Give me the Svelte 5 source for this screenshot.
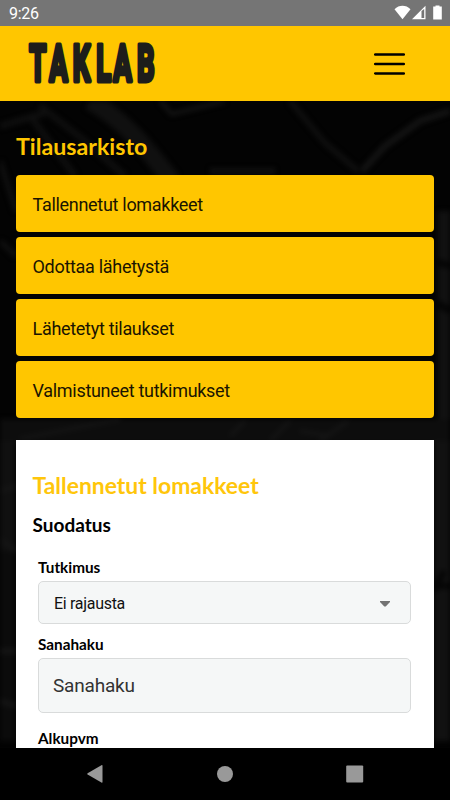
<script>
  const links = [
    'Tallennetut lomakkeet',
    'Odottaa lähetystä',
    'Lähetetyt tilaukset',
    'Valmistuneet tutkimukset'
  ];

  let selected = 0;
  let search = '';
</script>

<div class="screen">
  <div class="status">
    <span>9:26</span>
    <svg width="50" height="16" viewBox="0 0 50 16" fill="#fff">
      <path d="M0.5 4.2C5 -0.4 12 -0.4 16.5 4.2L8.5 14.2Z" />
      <path d="M31.5 0.8V14.2H18Z" fill="#fff" />
      <path d="M27.5 6V13H30.2V4Z" fill="#757575" />
      <path d="M41.5 1.5V0.6H45.5V1.5H47.8V14.6H39.2V1.5Z" />
    </svg>
  </div>

  <header>
    <svg class="logo" width="134" height="60" viewBox="0 -8 134 60">
      <text transform="scale(0.55 1)" x="4 40.5 83 126 157 200" y="39.2">TAKLAB</text>
    </svg>
    <button class="burger" aria-label="Valikko">
      <svg width="32" height="24" viewBox="0 0 32 24">
        <path d="M1.2 2.6H29.8M1.2 12H29.8M1.2 21.4H29.8" stroke="#000" stroke-width="2.5" stroke-linecap="round" />
      </svg>
    </button>
  </header>

  <main>
    <svg class="texture" width="450" height="647" viewBox="0 0 450 647" fill="none" stroke="#141414">
      <path d="M90 0C125 20 145 45 172 80" stroke-width="18" stroke="#101010" />
      <path d="M40 5L85 40L125 75M0 25L45 12M30 15L75 75" stroke-width="6" stroke="#0f0f0f" />
      <path d="M160 0L172 13L225 0" stroke-width="4" />
      <path d="M290 0L325 42L358 70" stroke-width="5" stroke="#101010" />
      <path d="M362 70L385 45L420 20L450 10" stroke-width="6" />
      <path d="M210 70H275" stroke-width="6" stroke="#0f0f0f" />
      <path d="M0 60L16 110M0 140L16 155" stroke-width="5" stroke="#101010" />
      <path d="M446 110V340" stroke-width="16" stroke="#111" />
      <path d="M434 160L450 165M434 200L450 210" stroke-width="7" stroke="#050505" />
      <path d="M0 330H450" stroke-width="24" stroke="#0d0d0d" />
      <path d="M20 338L120 318M230 335L245 320M270 340L290 320M320 340L348 320M300 330L330 335" stroke-width="4" />
      <path d="M7 340V450" stroke-width="16" stroke="#101010" />
      <path d="M7 450V640" stroke-width="16" stroke="#0b0b0b" />
      <path d="M0 390L16 385M0 438L16 450M0 550H16M0 600L16 605" stroke-width="6" />
      <path d="M443 340V640" stroke-width="18" stroke="#111" />
      <path d="M434 485H450M434 490L444 470" stroke-width="6" stroke="#050505" />
    </svg>

    <h1>Tilausarkisto</h1>

    <nav>
      {#each links as link, i}
        <button on:click={() => (selected = i)}>{link}</button>
      {/each}
    </nav>

    <section>
      <h2>{links[selected]}</h2>
      <h3>Suodatus</h3>

      <form on:submit|preventDefault>
        <label for="tutkimus">Tutkimus</label>
        <div class="select">
          <select id="tutkimus">
            <option>Ei rajausta</option>
          </select>
          <svg width="10" height="6" viewBox="0 0 10 6">
            <path d="M0 0H10V1L5.7 5.4H4.3L0 1Z" fill="#737373" />
          </svg>
        </div>

        <label for="sanahaku">Sanahaku</label>
        <input id="sanahaku" type="text" placeholder="Sanahaku" bind:value={search} />

        <label class="date" for="alkupvm">Alkupvm</label>
        <input id="alkupvm" type="text" />
      </form>
    </section>
  </main>

  <footer>
    <svg width="18" height="20" viewBox="0 0 18 20"><path d="M1.6 9.2L15.4 1.2Q16.5 0.8 16.5 1.8V18Q16.5 19 15.4 18.6L1.6 10.6Q0.6 9.9 1.6 9.2Z" /></svg>
    <svg width="18" height="18" viewBox="0 0 18 18"><circle cx="9" cy="9" r="8" /></svg>
    <svg width="18" height="18" viewBox="0 0 18 18"><rect x="0.2" y="0.5" width="17" height="17" rx="1" /></svg>
  </footer>
</div>

<style>
  .screen {
    width: 450px;
    height: 800px;
    display: flex;
    flex-direction: column;
    overflow: hidden;
    background: #000;
    font-family: Roboto, sans-serif;
  }

  .status {
    height: 26px;
    flex: none;
    box-sizing: border-box;
    display: flex;
    align-items: center;
    justify-content: space-between;
    padding: 1px 6px 0 9px;
    background: #757575;
    color: #fff;
    font-size: 16px;
    letter-spacing: -0.3px;
  }

  .status svg {
    margin-top: -1px;
  }

  header {
    height: 75px;
    flex: none;
    box-sizing: border-box;
    display: flex;
    align-items: center;
    justify-content: space-between;
    padding: 0 44px 0 27px;
    background: #ffc600;
  }

  .logo text {
    font-family: Roboto, sans-serif;
    font-size: 50px;
    font-weight: 700;
    fill: #1d1d1b;
    stroke: #1d1d1b;
    stroke-width: 4.8;
    stroke-linejoin: round;
  }

  .burger {
    display: flex;
    padding: 0;
    border: none;
    background: none;
  }

  main {
    position: relative;
    flex: 1;
    min-height: 0;
    overflow: hidden;
    padding: 0 16px;
    background: #030303;
  }

  .texture {
    position: absolute;
    top: 0;
    left: 0;
    filter: blur(2.5px);
  }

  h1, h2, h3, label {
    font-family: Lato, sans-serif;
    font-weight: 700;
  }

  h1 {
    position: relative;
    margin: 31px 0 14px;
    font-size: 23.2px;
    line-height: 29px;
    color: #ffc600;
  }

  nav {
    position: relative;
    display: grid;
    gap: 5px;
  }

  nav button {
    height: 57.1px;
    padding: 2px 16.5px 0;
    border: none;
    border-radius: 4px;
    background: #ffc600;
    font-family: inherit;
    font-size: 18px;
    letter-spacing: -0.3px;
    text-align: left;
    color: #1a1400;
  }

  section {
    position: relative;
    height: 400px;
    margin-top: 21.6px;
    padding: 30px 17px 0 16.5px;
    background: #fff;
  }

  h2 {
    margin: 0;
    font-size: 22.9px;
    line-height: 30px;
    color: #ffc60b;
  }

  h3 {
    margin: 13px 0 21px;
    font-size: 19px;
    line-height: 24px;
    color: #000;
  }

  form {
    display: flex;
    flex-direction: column;
    padding: 0 6px 0 5.5px;
  }

  label {
    margin-bottom: 5px;
    font-size: 15.3px;
    line-height: 18px;
    color: #000;
  }

  .select {
    position: relative;
    margin-bottom: 11px;
  }

  .select svg {
    position: absolute;
    top: 20px;
    right: 21px;
  }

  select, input {
    box-sizing: border-box;
    width: 100%;
    border: 1px solid #d9dbdb;
    border-radius: 5px;
    background: #f5f7f7;
    font-family: inherit;
    color: #111;
  }

  select {
    display: block;
    appearance: none;
    height: 43px;
    padding: 2px 15px 0;
    font-size: 16px;
    letter-spacing: -0.3px;
  }

  input {
    height: 55px;
    flex: none;
    padding: 1px 14px 0;
    font-size: 19px;
    letter-spacing: -0.2px;
  }

  input::placeholder {
    color: #333;
  }

  .date {
    margin-top: 16px;
  }

  footer {
    height: 52px;
    flex: none;
    display: flex;
    align-items: center;
    justify-content: center;
    gap: 112px;
    background: #000;
    fill: #999;
  }

  footer svg:first-child {
    margin-left: -1px;
  }
</style>
